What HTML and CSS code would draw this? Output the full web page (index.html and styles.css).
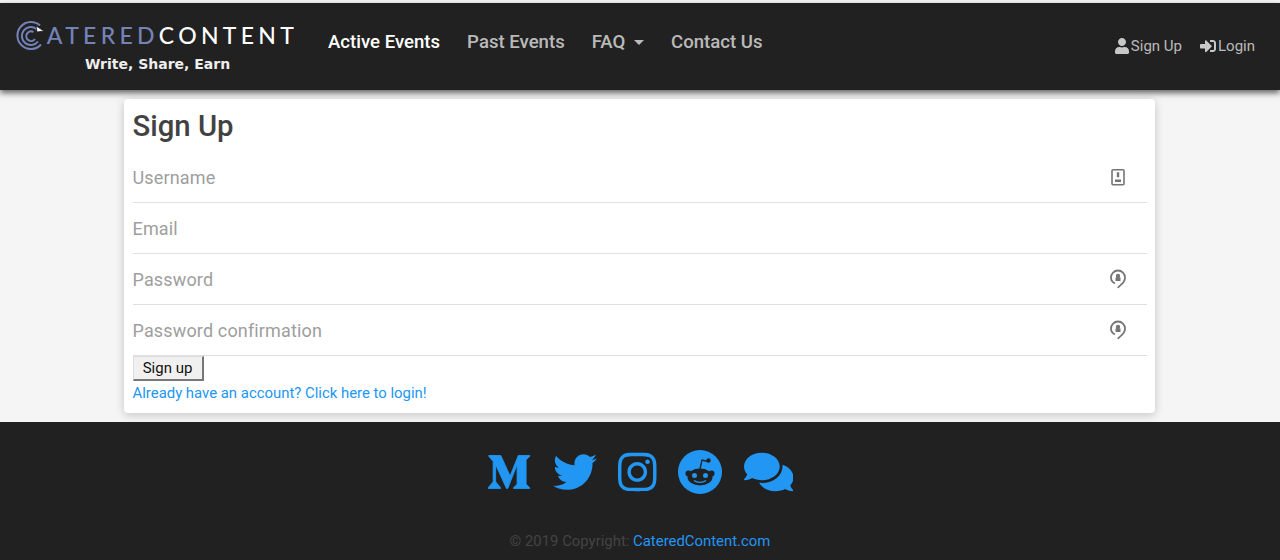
FILE: index.html
```html
<!DOCTYPE html>
<html lang="en">
<head>
    <meta charset="UTF-8">
    <meta name="viewport" content="width=device-width, initial-scale=1.0">
    <title>Catered Content - Sign Up</title>
    <link rel="stylesheet" href="styles.css">
</head>
<body>
    <nav class="navbar">
        <a class="brand" href="#">
            <span class="brand-name">
                <svg class="brand-mark" viewBox="0 0 30 30" fill="none" stroke="#7383b8" stroke-width="2">
                    <path d="M25 5.500A13.500 13.500 0 1 0 26 24.500"/>
                    <path d="M21.500 9A9 9 0 1 0 23 21.500"/>
                    <path d="M18.500 12A4.800 4.800 0 1 0 20 19"/>
                    <path d="M21 6l8 5-7 1z" fill="#fff" stroke="#212121" stroke-width=".8"/>
                </svg>
                <span class="brand-blue">ATERED</span><span class="brand-white">CONTENT</span>
            </span>
            <span class="brand-tag">Write, Share, Earn</span>
        </a>
        <ul class="nav-links">
            <li><a class="active" href="#">Active Events</a></li>
            <li><a href="#">Past Events</a></li>
            <li><a href="#">FAQ <span class="caret"></span></a></li>
            <li><a href="#">Contact Us</a></li>
        </ul>
        <ul class="nav-right">
            <li><a href="#"><svg class="nav-icon" viewBox="0 0 448 512"><path d="M224 256c70.700 0 128-57.300 128-128S294.700 0 224 0 96 57.300 96 128s57.300 128 128 128zm89.600 32h-16.700c-22.200 10.200-46.900 16-72.900 16s-50.600-5.800-72.900-16h-16.700C60.200 288 0 348.200 0 422.400V464c0 26.500 21.500 48 48 48h352c26.500 0 48-21.500 48-48v-41.600c0-74.200-60.200-134.400-134.400-134.400z"/></svg>Sign Up</a></li>
            <li><a href="#"><svg class="nav-icon" viewBox="0 0 512 512"><path d="M416 448h-84c-6.600 0-12-5.400-12-12v-40c0-6.600 5.400-12 12-12h84c17.700 0 32-14.300 32-32V160c0-17.700-14.300-32-32-32h-84c-6.600 0-12-5.400-12-12V76c0-6.600 5.400-12 12-12h84c53 0 96 43 96 96v192c0 53-43 96-96 96zm-47-201L201 79c-15-15-41-4.500-41 17v96H24c-13.300 0-24 10.700-24 24v96c0 13.300 10.700 24 24 24h136v96c0 21.500 26 32 41 17l168-168c9.300-9.400 9.300-24.600 0-34z"/></svg>Login</a></li>
        </ul>
    </nav>

    <main class="content">
        <section class="card">
            <h1>Sign Up</h1>
            <form>
                <label class="field">
                    <span>Username</span>
                    <svg class="field-icon" viewBox="0 0 16 20" fill="none" stroke="#757575" stroke-width="1.600">
                        <rect x="2" y="2.800" width="12" height="15" rx="1"/>
                        <path d="M8 5.300v5M5 13.800h6" stroke-width="2.400"/>
                    </svg>
                </label>
                <label class="field"><span>Email</span></label>
                <label class="field">
                    <span>Password</span>
                    <svg class="field-icon" viewBox="0 0 16 20" fill="none" stroke="#757575" stroke-width="1.800">
                        <path d="M8 19C8.500 16.500 15 15 15 8.500A7 7 0 0 0 1 8.500C1 11.500 2.800 13.500 5 14.500"/>
                        <circle cx="8" cy="7" r="2.200" fill="#757575" stroke="none"/>
                        <rect x="5.500" y="8.500" width="5" height="3.500" fill="#757575" stroke="none"/>
                    </svg>
                </label>
                <label class="field">
                    <span>Password confirmation</span>
                    <svg class="field-icon" viewBox="0 0 16 20" fill="none" stroke="#757575" stroke-width="1.800">
                        <path d="M8 19C8.500 16.500 15 15 15 8.500A7 7 0 0 0 1 8.500C1 11.500 2.800 13.500 5 14.500"/>
                        <circle cx="8" cy="7" r="2.200" fill="#757575" stroke="none"/>
                        <rect x="5.500" y="8.500" width="5" height="3.500" fill="#757575" stroke="none"/>
                    </svg>
                </label>
                <button type="submit">Sign up</button>
            </form>
            <a class="login-link" href="#">Already have an account? Click here to login!</a>
        </section>
    </main>

    <footer class="footer">
        <div class="socials">
            <a href="#"><svg class="medium" viewBox="0 0 512 512"><path d="M71.500 142.300c.6-5.900-1.700-11.800-6.100-15.800L20.300 72.100V64h140.200l108.400 237.700L364.200 64h133.700v8.100l-38.600 37c-3.300 2.500-5 6.700-4.300 10.800v272c-.7 4.100 1 8.300 4.300 10.800l37.700 37v8.100H307.300v-8.100l39.100-37.900c3.800-3.800 3.800-5 3.800-10.800V171.200L241.500 447.100h-14.700L100.400 171.200v184.900c-1.100 7.800 1.500 15.600 7 21.200l50.800 61.600v8.100h-144v-8L65 377.300c5.400-5.600 7.900-13.500 6.500-21.200V142.300z"/></svg></a>
            <a href="#"><svg class="twitter" viewBox="0 0 512 512"><path d="M459.370 151.716c.325 4.548.325 9.097.325 13.645 0 138.720-105.583 298.558-298.558 298.558-59.452 0-114.680-17.219-161.137-47.106 8.447.974 16.568 1.299 25.340 1.299 49.055 0 94.213-16.568 130.274-44.832-46.132-.975-84.792-31.188-98.112-72.772 6.498.974 12.995 1.624 19.818 1.624 9.421 0 18.843-1.300 27.614-3.573-48.081-9.747-84.143-51.980-84.143-102.985v-1.299c13.969 7.797 30.214 12.670 47.431 13.319-28.264-18.843-46.781-51.005-46.781-87.391 0-19.492 5.197-37.360 14.294-52.954 51.655 63.675 129.300 105.258 216.365 109.807-1.624-7.797-2.599-15.918-2.599-24.040 0-57.828 46.782-104.934 104.934-104.934 30.213 0 57.502 12.670 76.670 33.137 23.715-4.548 46.456-13.320 66.599-25.340-7.798 24.366-24.366 44.833-46.132 57.827 21.117-2.273 41.584-8.122 60.426-16.243-14.292 20.791-32.161 39.308-52.628 54.253z"/></svg></a>
            <a href="#"><svg class="instagram" viewBox="0 0 448 512"><path d="M224.100 141c-63.600 0-114.900 51.300-114.900 114.900s51.300 114.900 114.900 114.900S339 319.500 339 255.900 287.700 141 224.100 141zm0 189.600c-41.100 0-74.700-33.500-74.700-74.700s33.500-74.700 74.700-74.700 74.700 33.500 74.700 74.700-33.600 74.700-74.700 74.700zm146.400-194.300c0 14.900-12 26.800-26.800 26.800-14.900 0-26.800-12-26.800-26.800s12-26.800 26.800-26.800 26.800 12 26.800 26.800zm76.100 27.200c-1.700-35.900-9.900-67.700-36.200-93.900-26.200-26.200-58-34.400-93.900-36.200-37-2.100-147.900-2.100-184.900 0-35.800 1.700-67.600 9.900-93.900 36.100s-34.400 58-36.200 93.900c-2.100 37-2.100 147.900 0 184.900 1.700 35.900 9.900 67.700 36.200 93.900s58 34.400 93.900 36.200c37 2.100 147.900 2.100 184.900 0 35.900-1.700 67.700-9.900 93.900-36.200 26.200-26.200 34.400-58 36.200-93.900 2.100-37 2.100-147.800 0-184.800zM398.800 388c-7.800 19.600-22.900 34.700-42.600 42.600-29.500 11.700-99.500 9-132.100 9s-102.700 2.600-132.100-9c-19.600-7.800-34.700-22.900-42.600-42.600-11.700-29.500-9-99.500-9-132.100s-2.600-102.700 9-132.100c7.800-19.600 22.900-34.700 42.600-42.600 29.500-11.700 99.500-9 132.100-9s102.700-2.600 132.100 9c19.600 7.800 34.700 22.900 42.600 42.600 11.700 29.500 9 99.500 9 132.100s2.700 102.700-9 132.100z"/></svg></a>
            <a href="#"><svg class="reddit" viewBox="0 0 44 44">
                <circle cx="22" cy="22" r="22"/>
                <g fill="#212121">
                    <ellipse cx="22" cy="27" rx="12.500" ry="8.500"/>
                    <circle cx="10.500" cy="23.500" r="3"/>
                    <circle cx="33.500" cy="23.500" r="3"/>
                    <circle cx="30.500" cy="10.500" r="2.200"/>
                    <path d="M22 19l2-9 6 1.500" fill="none" stroke="#212121" stroke-width="1.300"/>
                </g>
                <circle cx="16.500" cy="25.500" r="2.500"/>
                <circle cx="27.500" cy="25.500" r="2.500"/>
                <path d="M16 30.500c3 2.500 9 2.500 12 0" fill="none" stroke="#2196f3" stroke-width="1.400"/>
            </svg></a>
            <a href="#"><svg class="comments" viewBox="0 0 576 512"><path d="M416 192c0-88.400-93.100-160-208-160S0 103.600 0 192c0 34.300 14.100 65.900 38 92-13.400 30.200-35.500 54.200-35.800 54.500-2.200 2.300-2.800 5.700-1.500 8.700S4.800 352 8 352c36.600 0 66.900-12.300 88.700-25 32.200 15.700 70.300 25 111.300 25 114.900 0 208-71.600 208-160zm122 220c23.900-26 38-57.700 38-92 0-66.900-53.500-124.200-129.300-148.100.9 6.600 1.300 13.300 1.300 20.100 0 105.900-107.700 192-240 192-10.800 0-21.300-.8-31.700-1.900C207.800 439.600 281.800 480 368 480c41 0 79.100-9.200 111.300-25 21.800 12.700 52.100 25 88.700 25 3.200 0 6.100-1.900 7.300-4.800 1.300-2.900.7-6.300-1.500-8.700-.3-.3-22.400-24.200-35.800-54.500z"/></svg></a>
        </div>
        <p class="copyright">© 2019 Copyright: <a href="#">CateredContent.com</a></p>
    </footer>
</body>
</html>
```

FILE: styles.css
```css
html, body {
    margin: 0;
    height: 560px;
    overflow: hidden;
}

body {
    display: flex;
    flex-direction: column;
    padding-top: 3px;
    box-sizing: border-box;
    background-color: #f5f5f5;
    font-family: Roboto, "Liberation Sans", sans-serif;
    font-size: 16px;
    color: #212529;
}

a {
    text-decoration: none;
}

ul {
    list-style: none;
    margin: 0;
    padding: 0;
}

/* Navbar */
.navbar {
    display: flex;
    align-items: center;
    height: 87px;
    flex-shrink: 0;
    padding: 0 25px 0 16px;
    background-color: #212121;
    box-shadow: 0 3px 6px rgba(0, 0, 0, 0.6);
    position: relative;
}

.brand {
    display: flex;
    flex-direction: column;
    align-items: center;
    box-sizing: border-box;
    width: 280px;
    padding-left: 2px;
}

.brand-name {
    display: flex;
    align-items: center;
    font-family: Lato, sans-serif;
    font-size: 23px;
    font-weight: 500;
    line-height: 30px;
    letter-spacing: 4.300px;
    white-space: nowrap;
}

.brand-mark {
    width: 30px;
    height: 30px;
    margin-left: -1px;
    margin-right: 2px;
}

.brand-blue {
    color: #7383b8;
}

.brand-white {
    color: #fff;
}

.brand-tag {
    margin-top: 6px;
    margin-left: 1px;
    font-family: "DejaVu Sans", sans-serif;
    font-size: 14px;
    font-weight: bold;
    line-height: 17px;
    color: #eee;
}

.nav-links {
    display: flex;
    gap: 27px;
    margin-left: 32px;
    margin-top: -9px;
}

.nav-links a {
    font-size: 18.600px;
    font-weight: 500;
    color: rgba(255, 255, 255, 0.7);
}

.nav-links a.active {
    color: #fff;
}

.caret {
    display: inline-block;
    margin-left: 4px;
    vertical-align: 3px;
    border-top: 5px solid;
    border-left: 5px solid transparent;
    border-right: 5px solid transparent;
}

.nav-right {
    display: flex;
    gap: 18px;
    margin-left: auto;
    margin-top: -2px;
}

.nav-right a {
    display: flex;
    align-items: center;
    font-size: 15px;
    color: rgba(255, 255, 255, 0.7);
}

.nav-icon {
    height: 16px;
    margin-right: 2px;
    fill: rgba(255, 255, 255, 0.75);
}

/* Sign up card */
.content {
    height: 332px;
    flex-shrink: 0;
    padding: 9px 125px 0 124px;
    box-sizing: border-box;
}

.card {
    height: 314px;
    padding: 10px 8px 0 8.500px;
    box-sizing: border-box;
    background-color: #fff;
    border-radius: 4px;
    box-shadow: 0 2px 10px rgba(0, 0, 0, 0.2);
}

h1 {
    margin: 0 0 8px;
    font-size: 29.300px;
    font-weight: 500;
    line-height: 35px;
    color: #424242;
}

.field {
    display: flex;
    align-items: center;
    justify-content: space-between;
    height: 50px;
    padding-right: 21px;
    border-bottom: 1px solid #e0e0e0;
    font-size: 18px;
    letter-spacing: 0.150px;
    color: #9e9e9e;
}

button {
    display: block;
    width: 71px;
    height: 25px;
    padding: 0;
    background-color: #f0f0f0;
    border-style: solid;
    border-width: 1px 2px 2px 1px;
    border-color: #ddd #777 #777 #ddd;
    font-family: Roboto, sans-serif;
    font-size: 15px;
    color: #111;
}

.field-icon {
    height: 20px;
    width: 16px;
}

.login-link {
    display: block;
    margin-top: 3px;
    font-size: 14.900px;
    line-height: 19px;
    color: #2196f3;
}

/* Footer */
.footer {
    flex: 1;
    background-color: #212121;
    text-align: center;
}

.socials {
    display: flex;
    justify-content: center;
    align-items: center;
    gap: 21.500px;
    height: 44px;
    margin-top: 28px;
}

.socials a {
    display: flex;
}

.socials svg {
    height: 44px;
    fill: #2196f3;
}

.socials .medium {
    stroke: #2196f3;
    stroke-width: 10px;
}

.copyright {
    margin: 38px 0 0;
    font-size: 14.900px;
    line-height: 19px;
    color: #444;
}

.copyright a {
    color: #2196f3;
}
```
